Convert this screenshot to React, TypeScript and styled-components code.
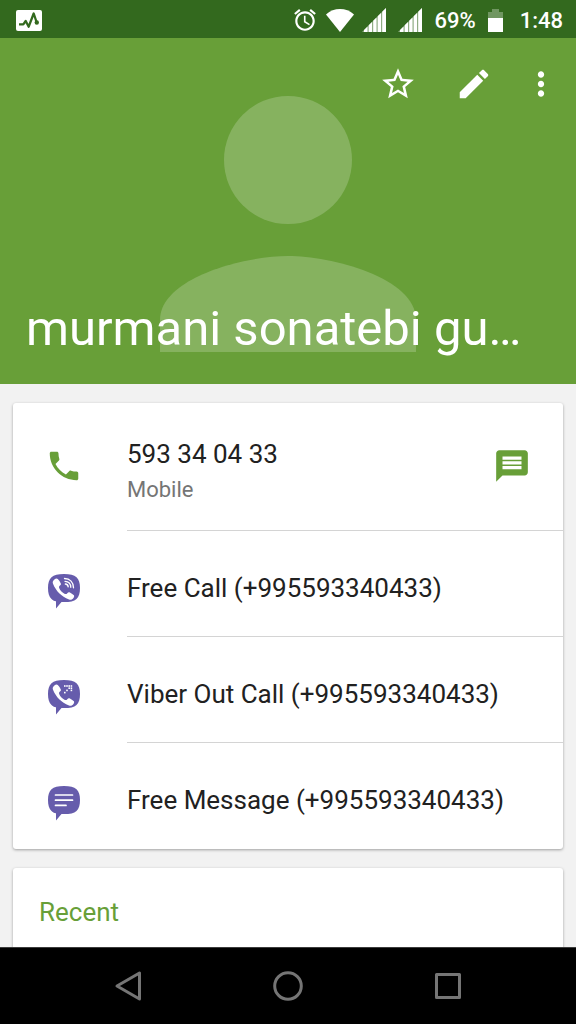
import React from 'react';
import styled, { createGlobalStyle } from 'styled-components';

const GlobalStyle = createGlobalStyle`
  * { box-sizing: border-box; }
  body { margin: 0; background: #f2f2f2; font-family: Roboto, sans-serif; }
  button { font: inherit; color: inherit; background: none; border: 0; padding: 0; cursor: pointer; }
  svg { display: block; flex: none; }
`;

const Screen = styled.div`
  display: flex;
  flex-direction: column;
  height: 100vh;
  background: #f2f2f2;
`;

const StatusBar = styled.header`
  display: flex;
  flex: none;
  align-items: center;
  justify-content: space-between;
  height: 38px;
  padding: 2px 13px 0 16px;
  background: #33691e;
  color: #fff;
  font-size: 22px;
  font-weight: 500;
  line-height: 26px;
`;

const StatusGroup = styled.div<{ $tight?: boolean }>`
  display: flex;
  align-items: center;
  gap: ${(p) => (p.$tight ? 8 : 12)}px;
`;

const BatteryLevel = styled.span`
  padding-top: 2px;
`;

const Clock = styled.time`
  padding: 2px 0 0 5px;
`;

const Hero = styled.section`
  display: grid;
  flex: none;
  grid-template-columns: 100%;
  height: 346px;
  background: #689f38;
  color: #fff;
`;

const Avatar = styled.svg`
  grid-area: 1 / 1;
  justify-self: center;
  margin-top: 58px;
`;

const HeroContent = styled.div`
  grid-area: 1 / 1;
  z-index: 1;
  display: flex;
  flex-direction: column;
  justify-content: space-between;
  padding: 27px 25px 23px 26px;
`;

const Actions = styled.div`
  display: flex;
  justify-content: flex-end;
  gap: 38px;
`;

const IconButton = styled.button<{ $narrow?: boolean }>`
  display: flex;
  align-items: center;
  justify-content: center;
  width: ${(p) => (p.$narrow ? 20 : 38)}px;
  height: 38px;
`;

const Name = styled.h1`
  margin: 0;
  overflow: hidden;
  font-size: 49px;
  font-weight: 400;
  line-height: 64px;
  white-space: nowrap;
`;

const Content = styled.main`
  display: flex;
  flex: 1;
  flex-direction: column;
  gap: 19px;
  min-height: 0;
  padding: 19px 13px 0;
  overflow-y: auto;
  scrollbar-width: none;
`;

const Card = styled.section`
  flex: none;
  padding-bottom: 1px;
  border-radius: 3px;
  background: #fff;
  box-shadow: 0 1px 3px rgba(0, 0, 0, 0.35);
`;

const Row = styled.div<{ $tall?: boolean }>`
  display: flex;
  height: ${(p) => (p.$tall ? 127 : 106)}px;
`;

const RowIcon = styled.div`
  display: flex;
  flex: none;
  justify-content: center;
  width: 102px;
  padding-top: 44px;
`;

const RowBody = styled.div<{ $divided?: boolean }>`
  display: flex;
  flex: 1;
  align-items: flex-start;
  justify-content: space-between;
  margin-left: 12px;
  padding: ${(p) => (p.$divided ? 40 : 34)}px 32px 0 0;
  border-top: ${(p) => (p.$divided ? '1px solid #d4d4d4' : '0')};
`;

const Primary = styled.div`
  color: #212121;
  font-size: 26px;
  line-height: 34px;
`;

const RowButton = styled.button`
  color: #212121;
  font-size: 26px;
  line-height: 34px;
  text-align: left;
`;

const Secondary = styled.div`
  color: #757575;
  font-size: 22px;
  line-height: 38px;
`;

const MessageButton = styled(IconButton)`
  margin-top: 10px;
`;

const RecentTitle = styled.h2`
  margin: 0;
  padding: 26px 26px 80px;
  color: #689f38;
  font-size: 26px;
  font-weight: 400;
  line-height: 36px;
`;

const NavBar = styled.nav`
  display: flex;
  flex: none;
  justify-content: center;
  height: 77px;
  border-top: 1px solid #3c3c3c;
  background: #000;
  color: #757575;
`;

const NavButton = styled.button`
  display: flex;
  align-items: center;
  justify-content: center;
  width: 160px;
`;

const Material = ({ d, fill = '#fff', size = 38 }: { d: string; fill?: string; size?: number }) => (
  <svg width={size} height={size} viewBox="0 0 24 24" fill={fill} aria-hidden="true">
    <path d={d} />
  </svg>
);

const PHONE =
  'M6.62 10.79c1.44 2.83 3.76 5.14 6.59 6.59l2.2-2.2c.27-.27.67-.36 1.02-.24 1.12.37 2.33.57 3.57.57.55 0 1 .45 1 1V20c0 .55-.45 1-1 1-9.39 0-17-7.61-17-17 0-.55.45-1 1-1h3.5c.55 0 1 .45 1 1 0 1.25.2 2.45.57 3.57.11.35.03.74-.25 1.02l-2.2 2.2z';
const STAR =
  'M22 9.24l-7.19-.62L12 2 9.19 8.63 2 9.24l5.46 4.73L5.82 21 12 17.27 18.18 21l-1.63-7.03L22 9.24zM12 15.4l-3.76 2.27 1-4.28-3.32-2.88 4.38-.38L12 6.1l1.71 4.04 4.38.38-3.32 2.88 1 4.28L12 15.4z';
const EDIT =
  'M3 17.25V21h3.75L17.81 9.94l-3.75-3.75L3 17.25zM20.71 7.04c.39-.39.39-1.02 0-1.41l-2.34-2.34c-.39-.39-1.02-.39-1.41 0l-1.83 1.83 3.75 3.75 1.83-1.83z';
const MORE =
  'M12 8c1.1 0 2-.9 2-2s-.9-2-2-2-2 .9-2 2 .9 2 2 2zm0 2c-1.1 0-2 .9-2 2s.9 2 2 2 2-.9 2-2-.9-2-2-2zm0 6c-1.1 0-2 .9-2 2s.9 2 2 2 2-.9 2-2-.9-2-2-2z';
const MESSAGE =
  'M20 2H4c-1.1 0-1.99.9-1.99 2L2 22l4-4h14c1.1 0 2-.9 2-2V4c0-1.1-.9-2-2-2zm-2 12H6v-2h12v2zm0-3H6V9h12v2zm0-3H6V6h12v2z';
const ALARM =
  'M22 5.72l-4.6-3.86-1.29 1.53 4.6 3.86L22 5.72zM7.88 3.39L6.6 1.86 2 5.71l1.29 1.53 4.59-3.85zM12.5 8H11v6l4.75 2.85.75-1.23-4-2.37V8zM12 4c-4.97 0-9 4.03-9 9s4.02 9 9 9c4.97 0 9-4.03 9-9s-4.03-9-9-9zm0 16c-3.87 0-7-3.13-7-7s3.13-7 7-7 7 3.13 7 7-3.13 7-7 7z';

const Signal = () => (
  <svg width="24" height="24" viewBox="0 0 24 24" aria-hidden="true">
    <path d="M0 24L24 0v24z" fill="#fff" fillOpacity=".45" />
    <path
      fill="#fff"
      d="M2 22l3.500-3.500V24H2zM6.700 17.300l3.300-3.300v10H6.700zM11.200 12.800l3.300-3.300V24h-3.300zM15.700 8.300L19 5v19h-3.300zM20.200 3.800L24 0v24h-3.800z"
    />
  </svg>
);

const ViberBubble = ({ children }: { children: React.ReactNode }) => (
  <svg width="32" height="36" viewBox="0 0 32 36" aria-hidden="true">
    <path
      fill="#665cac"
      d="M16 0C22 0 26 .8 28.500 3.200 31 5.600 32 9 32 14s-1 8.500-3.500 10.900C26 27.300 22 28 16 28h-2.500L8 34.600V27.200C6 26.700 4.600 26 3.500 24.900 1 22.500 0 19 0 14S1 5.600 3.500 3.200C6 .8 10 0 16 0z"
    />
    {children}
  </svg>
);

const Handset = () => (
  <path
    fill="#fff"
    d="M6.400 5.400C7.600 4.400 8.900 4.100 9.800 5c1.300 1.300 2.200 2.700 2.900 4.200.5 1 .2 1.700-.7 2.400-1 .8-1.200 1.400-.8 2.500 1.100 2.800 3 4.700 5.700 5.800 1.100.4 1.700.2 2.400-.7.8-1 1.600-1.200 2.600-.7 1.400.7 2.600 1.600 3.700 2.600.8.7.7 1.700 0 2.600-1.300 1.800-2.700 2.500-4.600 1.800C13.300 22.400 8 17 5 9.700c-.7-1.800-.1-3.100 1.400-4.300z"
  />
);

const DOTS = [
  [16.8, 5.2], [19, 5.2], [21.2, 5.2], [23.4, 5.2],
  [21.2, 7.4], [23.4, 7.4],
  [19, 9.6], [23.4, 9.6],
  [16.8, 11.8],
];

const ViberCall = () => (
  <ViberBubble>
    <Handset />
    <g fill="none" stroke="#fff" strokeWidth="1.3" strokeLinecap="round">
      <path d="M16.500 4.500c5.500 0 9 3.800 9 9.300" />
      <path d="M17 7.300c3.600.1 5.700 2.400 5.800 6" />
      <path d="M17.300 10c1.900.1 2.800 1 2.900 2.900" />
    </g>
  </ViberBubble>
);

const ViberOut = () => (
  <ViberBubble>
    <Handset />
    {DOTS.map(([x, y]) => (
      <rect key={`${x}-${y}`} x={x - 0.8} y={y} width="1.6" height="1.6" fill="#fff" />
    ))}
  </ViberBubble>
);

const ViberMessage = () => (
  <ViberBubble>
    <path
      d="M7.500 9h17M7.500 14.200h17M7.500 19.400h10.500"
      stroke="#fff"
      strokeWidth="1.7"
      strokeLinecap="round"
    />
  </ViberBubble>
);

const viberRows = [
  { label: 'Free Call (+995593340433)', Icon: ViberCall },
  { label: 'Viber Out Call (+995593340433)', Icon: ViberOut },
  { label: 'Free Message (+995593340433)', Icon: ViberMessage },
];

export default function App() {
  return (
    <Screen>
      <GlobalStyle />
      <StatusBar>
        <svg width="26" height="21" viewBox="0 0 26 21" aria-hidden="true">
          <rect width="26" height="21" rx="2" fill="#fff" />
          <path d="M3 14.400h4.300L9.700 11l3 5.700L17.700 3.500l3 9" fill="none" stroke="#33691e" strokeWidth="2.3" strokeLinejoin="round" />
          <circle cx="20.8" cy="12.5" r="2.2" fill="#33691e" />
        </svg>
        <StatusGroup>
          <StatusGroup $tight>
            <Material d={ALARM} size={26} />
            <svg width="28" height="23" viewBox="0 0 28 23" aria-hidden="true">
              <path d="M0 5.500C8-1.800 20-1.800 28 5.500L14 23z" fill="#fff" />
            </svg>
            <Signal />
          </StatusGroup>
          <Signal />
          <BatteryLevel>69%</BatteryLevel>
          <svg width="15" height="23" viewBox="0 0 15 23" aria-hidden="true">
            <path d="M0 3h4V0h7v3h4v6H0z" fill="#fff" fillOpacity=".3" />
            <path d="M0 9h15v14H0z" fill="#fff" />
          </svg>
          <Clock>1:48</Clock>
        </StatusGroup>
      </StatusBar>

      <Hero>
        <Avatar width="256" height="256" viewBox="0 0 256 256" fill="#fff" fillOpacity=".2" aria-hidden="true">
          <circle cx="128" cy="64" r="64" />
          <path d="M128 160C85.300 160 0 181.400 0 224v32h256v-32c0-42.600-85.300-64-128-64z" />
        </Avatar>
        <HeroContent>
          <Actions>
            <IconButton aria-label="Add to favorites"><Material d={STAR} /></IconButton>
            <IconButton aria-label="Edit contact"><Material d={EDIT} /></IconButton>
            <IconButton $narrow aria-label="More options"><Material d={MORE} /></IconButton>
          </Actions>
          <Name>murmani sonatebi gu…</Name>
        </HeroContent>
      </Hero>

      <Content>
        <Card>
          <Row $tall>
            <RowIcon><Material d={PHONE} fill="#689f38" /></RowIcon>
            <RowBody>
              <div>
                <Primary>593 34 04 33</Primary>
                <Secondary>Mobile</Secondary>
              </div>
              <MessageButton aria-label="Send message"><Material d={MESSAGE} fill="#689f38" /></MessageButton>
            </RowBody>
          </Row>
          {viberRows.map(({ label, Icon }) => (
            <Row key={label}>
              <RowIcon><Icon /></RowIcon>
              <RowBody $divided>
                <RowButton>{label}</RowButton>
              </RowBody>
            </Row>
          ))}
        </Card>
        <Card>
          <RecentTitle>Recent</RecentTitle>
        </Card>
      </Content>

      <NavBar>
        <NavButton aria-label="Back">
          <svg width="30" height="32" viewBox="0 0 30 32" fill="none" stroke="currentColor" strokeWidth="3" strokeLinejoin="round" aria-hidden="true">
            <path d="M26.500 3v26L4 16z" />
          </svg>
        </NavButton>
        <NavButton aria-label="Home">
          <svg width="32" height="32" viewBox="0 0 32 32" fill="none" stroke="currentColor" strokeWidth="3" aria-hidden="true">
            <circle cx="16" cy="16" r="13.3" />
          </svg>
        </NavButton>
        <NavButton aria-label="Overview">
          <svg width="32" height="32" viewBox="0 0 32 32" fill="none" stroke="currentColor" strokeWidth="3" strokeLinejoin="round" aria-hidden="true">
            <rect x="4.5" y="4.5" width="23" height="23" />
          </svg>
        </NavButton>
      </NavBar>
    </Screen>
  );
}
